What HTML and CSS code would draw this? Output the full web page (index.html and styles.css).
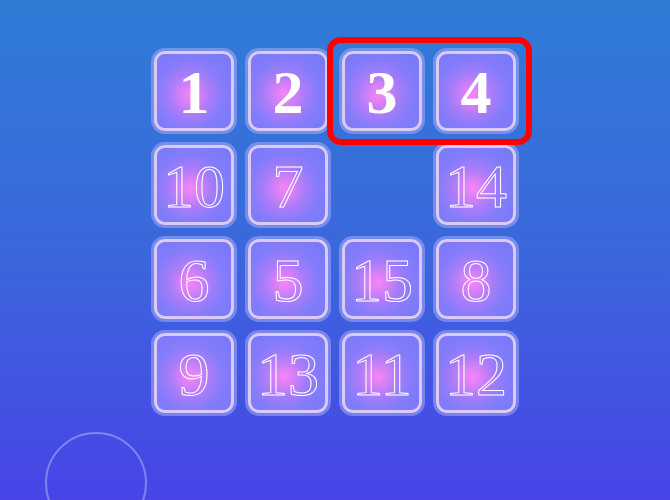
FILE: index.html
```html
<!DOCTYPE html>
<html>
<head>
<meta charset="utf-8">
<link rel="stylesheet" href="styles.css">
</head>
<body>
<main class="stage">
  <div class="board">
    <div class="tile solid">1</div>
    <div class="tile solid">2</div>
    <div class="tile solid">3</div>
    <div class="tile solid">4</div>
    <div class="tile">10</div>
    <div class="tile">7</div>
    <div class="empty"></div>
    <div class="tile">14</div>
    <div class="tile">6</div>
    <div class="tile">5</div>
    <div class="tile">15</div>
    <div class="tile">8</div>
    <div class="tile">9</div>
    <div class="tile">13</div>
    <div class="tile">11</div>
    <div class="tile">12</div>
    <div class="highlight"></div>
  </div>
  <div class="ring"></div>
</main>
</body>
</html>
```

FILE: styles.css
```css
html, body {
  margin: 0;
  padding: 0;
  width: 670px;
  height: 500px;
  overflow: hidden;
}
body {
  background: linear-gradient(180deg, #2f7cd6 0%, #3b67dc 50%, #4844e7 100%);
  font-family: "Liberation Serif", "DejaVu Serif", serif;
}
.stage {
  position: relative;
  width: 670px;
  height: 500px;
  overflow: hidden;
  display: flex;
  justify-content: center;
  padding-top: 51px;
  box-sizing: border-box;
}
.board {
  position: relative;
  display: grid;
  grid-template-columns: repeat(4, 80px);
  grid-auto-rows: 80px;
  gap: 14px;
  align-self: flex-start;
}
.tile {
  box-sizing: border-box;
  width: 80px;
  height: 80px;
  border: 3px solid #dccaf6;
  border-radius: 11px;
  box-shadow: 0 0 0 3px rgba(165, 170, 255, 0.55);
  background: radial-gradient(circle at 45% 55%, #f885f6 0%, #d880f7 16%, #a87cf9 36%, #857cfb 58%, #7479f8 100%);
  display: flex;
  align-items: center;
  justify-content: center;
  font-size: 62px;
  line-height: 1;
  color: transparent;
  -webkit-text-stroke: 1px #ffffff;
  padding-top: 2px;
}
.tile.solid {
  color: #ffffff;
  font-weight: bold;
  -webkit-text-stroke: 0;
}
.highlight {
  position: absolute;
  left: 173px;
  top: -14px;
  width: 205px;
  height: 108px;
  box-sizing: border-box;
  border: 6px solid #ff0000;
  border-radius: 14px;
}
.ring {
  position: absolute;
  left: 45px;
  top: 432px;
  width: 102px;
  height: 102px;
  box-sizing: border-box;
  border: 2.5px solid rgba(190, 190, 255, 0.5);
  border-radius: 50%;
}
```
